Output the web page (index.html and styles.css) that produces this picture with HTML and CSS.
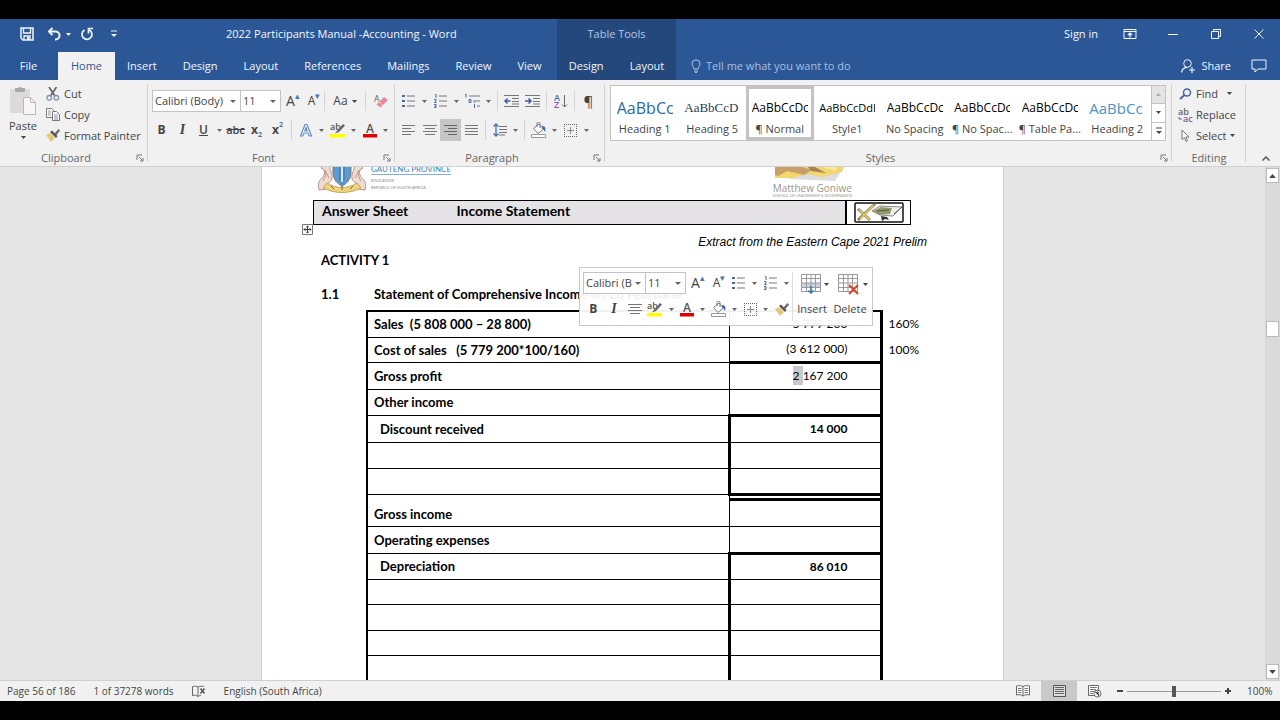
FILE: index.html
```html
<!DOCTYPE html>
<html lang="en">
<head>
  <meta charset="UTF-8">
  <meta name="viewport" content="width=device-width, initial-scale=1.0">
  <title>2022 Participants Manual -Accounting - Word</title>
  <link rel="stylesheet" href="styles.css">
</head>
<body>
  <!-- Icon sprite -->
  <svg class="sprite" aria-hidden="true">
    <symbol id="i-save" viewBox="0 0 14 14"><path d="M1 1h12v12H3l-2-2z" fill="none" stroke="currentColor" stroke-width="1.5"/><path d="M3.5 1v5h7V1M4 13V9h6v4" fill="none" stroke="currentColor" stroke-width="1.3"/><path d="M7 10h2v3H7z" fill="currentColor"/></symbol>
    <symbol id="i-undo" viewBox="0 0 14 14"><path d="M2 4.500h6.500a4 4 0 0 1 0 8H8" fill="none" stroke="currentColor" stroke-width="2"/><path d="M5.500 1L2 4.500 5.500 8" fill="none" stroke="currentColor" stroke-width="2"/></symbol>
    <symbol id="i-redo" viewBox="0 0 14 14"><path d="M9 2.800A5 5 0 1 1 4.500 3" fill="none" stroke="currentColor" stroke-width="1.700"/><path d="M13 1.500H8.500V6.500" fill="none" stroke="currentColor" stroke-width="1.700"/></symbol>
    <symbol id="i-custom" viewBox="0 0 6 8"><path d="M0 1h6" stroke="currentColor"/><path d="M0 4h6L3 7z" fill="currentColor"/></symbol>
    <symbol id="i-display" viewBox="0 0 14 12"><path d="M1 1.500h12v9H1zM1 3.500h12" fill="none" stroke="currentColor"/><path d="M7 9.500V5M5 7l2-2 2 2" fill="none" stroke="currentColor" stroke-width="1.200"/></symbol>
    <symbol id="i-min" viewBox="0 0 10 10"><path d="M0 5.500h10" stroke="currentColor"/></symbol>
    <symbol id="i-restore" viewBox="0 0 10 10"><path d="M.5 2.500h7v7h-7zM2.500 2.500v-2h7v7h-2" fill="none" stroke="currentColor"/></symbol>
    <symbol id="i-close" viewBox="0 0 10 10"><path d="M.5.5l9 9M9.500.5l-9 9" stroke="currentColor"/></symbol>
    <symbol id="i-bulb" viewBox="0 0 10 14"><path d="M3 10C3 8 1 7.500 1 4.800a4 4 0 0 1 8 0C9 7.500 7 8 7 10zM3 12h4M4 13.500h2" fill="none" stroke="currentColor"/></symbol>
    <symbol id="i-share" viewBox="0 0 14 14"><circle cx="6.500" cy="4.500" r="3.800" fill="none" stroke="currentColor"/><path d="M.5 13.500C1 10 3 8.500 6 8.300M11 8v6M8 11h6" fill="none" stroke="currentColor" stroke-width="1.200"/></symbol>
    <symbol id="i-comment" viewBox="0 0 16 14"><path d="M1 1h14v9H7l-3 3v-3H1z" fill="none" stroke="currentColor"/></symbol>
    <symbol id="i-caret" viewBox="0 0 5 3"><path d="M0 0h5L2.500 3z" fill="currentColor"/></symbol>
    <symbol id="i-launch" viewBox="0 0 8 8"><path d="M1 6V1h5" fill="none" stroke="#777"/><path d="M3 3l4 4M7 4v3H4" fill="none" stroke="#777"/></symbol>

    <symbol id="i-paste" viewBox="0 0 28 30"><path d="M1 3h20v24H1z" fill="#dcdadb"/><path d="M6 2h3a2.500 2.500 0 0 1 4 0h3v4H6z" fill="#aaa8a9"/><path d="M14.500 11.500h7l5 5v12h-12z" fill="#f8f6f8" stroke="#bbb7ba"/><path d="M21.500 11.500v5h5" fill="none" stroke="#bbb7ba"/></symbol>
    <symbol id="i-cut" viewBox="0 0 14 14"><path d="M3 0l6 9M10.500 0l-6 9" stroke="#666" stroke-width="1.700"/><circle cx="3.200" cy="10.800" r="2.300" fill="none" stroke="#8294b2" stroke-width="1.300"/><circle cx="10.300" cy="10.800" r="2.300" fill="none" stroke="#8294b2" stroke-width="1.300"/></symbol>
    <symbol id="i-copy" viewBox="0 0 14 13"><path d="M.5.5h5l2 2v7h-7z" fill="#fff" stroke="#777"/><path d="M2 3h3M2 5h3M2 7h3" stroke="#999"/><path d="M6.500 3.500h4l3 3v6h-7z" fill="#fff" stroke="#777"/><path d="M8 7h4M8 9h4M8 11h4" stroke="#8294b2"/></symbol>
    <symbol id="i-painter" viewBox="0 0 14 13"><path d="M0 6l4-2 5 5-4 4z" fill="#e3c97a"/><path d="M4 3l6 6 1.500-2L6 1.500z" fill="#555"/><path d="M8.500 4.500L12.500 0 14 1.500 10.500 6z" fill="#666"/></symbol>
    <symbol id="i-eraser" viewBox="0 0 14 14"><text x="0" y="8" font-size="9" fill="#666" font-family="Open Sans, sans-serif">A</text><path d="M2.500 10.500L10 3l4 3-7.500 7.500z" fill="#e68a9b"/><path d="M5 8l4 3.500" stroke="#f6d5da"/></symbol>
    <symbol id="i-effects" viewBox="0 0 14 14"><path d="M1.500 13L6 1.500h2L12.500 13h-2.300L9 10H5l-1.200 3zM5.800 8h2.400L7 4.500z" fill="#fff" stroke="#5f8fca" stroke-width="1.200"/></symbol>
    <symbol id="i-highlight" viewBox="0 0 16 16"><text x="0" y="8" font-size="9" font-weight="600" fill="#555" font-family="Open Sans, sans-serif">ab</text><path d="M6 10l7-8 2 1.500L9 10l-4 1.500z" fill="#666"/><path d="M0 12h15v3.500H0z" fill="#ff0"/></symbol>
    <symbol id="i-color" viewBox="0 0 16 16"><text x="4" y="11" font-size="12" font-weight="600" fill="#555" font-family="Open Sans, sans-serif">A</text><path d="M1 12h14v3.500H1z" fill="#e00000"/></symbol>
    <symbol id="i-bullets" viewBox="0 0 14 14"><path d="M0 1h3v2H0zM0 6h3v2H0zM0 11h3v2H0z" fill="#4a6c9c"/><path d="M5 2h8M5 7h8M5 12h8" stroke="#777"/></symbol>
    <symbol id="i-numbers" viewBox="0 0 14 14"><path d="M1 .5h1V4M0 5.500h2V7L.5 8.500h2M0 10.500h2v3H0M.5 12H2" fill="none" stroke="#4a6c9c"/><path d="M5 2h8M5 7h8M5 12h8" stroke="#777"/></symbol>
    <symbol id="i-multi" viewBox="0 0 16 14"><path d="M1 0v3.500M0 .5h1M4 5.500h2v3H4zM9 8.500h1M9.500 10v4" fill="none" stroke="#4a6c9c"/><path d="M4 2h11M8 7h7M12 12h3" stroke="#777"/></symbol>
    <symbol id="i-outdent" viewBox="0 0 16 12"><path d="M0 .5h15M8 3.500h7M8 6.500h7M8 9h7M0 11.500h15" stroke="#777"/><path d="M6.500 6H1M3.500 3.500L1 6l2.500 2.500" fill="none" stroke="#3d5f93" stroke-width="1.500"/></symbol>
    <symbol id="i-indent" viewBox="0 0 16 12"><path d="M0 .5h15M8 3.500h7M8 6.500h7M8 9h7M0 11.500h15" stroke="#777"/><path d="M0 6h6M3.500 3.500L6 6 3.500 8.500" fill="none" stroke="#3d5f93" stroke-width="1.500"/></symbol>
    <symbol id="i-sort" viewBox="0 0 14 16"><text x="0" y="8" font-size="9" font-weight="600" fill="#4673ad" font-family="Open Sans, sans-serif">A</text><text x="0" y="15" font-size="9" font-weight="600" fill="#8a5ba5" font-family="Open Sans, sans-serif">Z</text><path d="M10.500 2v12M8 11.500l2.500 2.500 2.500-2.500" fill="none" stroke="#666"/></symbol>
    <symbol id="i-left" viewBox="0 0 14 11"><path d="M0 .5h13M0 3.500h9M0 6.500h13M0 9.500h9" stroke="#777"/></symbol>
    <symbol id="i-center" viewBox="0 0 14 11"><path d="M0 .5h14M2 3.500h10M0 6.500h14M2 9.500h10" stroke="#777"/></symbol>
    <symbol id="i-right" viewBox="0 0 14 11"><path d="M0 .5h13M4 3.500h9M0 6.500h13M4 9.500h9" stroke="#666"/></symbol>
    <symbol id="i-justify" viewBox="0 0 14 11"><path d="M0 .5h13M0 3.500h13M0 6.500h13M0 9.500h13" stroke="#777"/></symbol>
    <symbol id="i-spacing" viewBox="0 0 14 14"><path d="M3 1v12M.5 3.500L3 1l2.500 2.500M.5 10.500L3 13l2.500-2.500" fill="none" stroke="#4673ad" stroke-width="1.300"/><path d="M6 3.500h8M6 6.500h8M6 9.500h8M6 12h6" stroke="#777"/></symbol>
    <symbol id="i-fill" viewBox="0 0 16 16"><path d="M2.500 6.500L8 2l4.500 5L7 11.500z" fill="#fff" stroke="#777"/><path d="M6 5V1.500A1.500 1.500 0 0 1 9 1.500V6" fill="none" stroke="#777"/><path d="M11 4c4 0 4 3 3 6-1-1-1-3-3-3z" fill="#4673ad"/><path d="M.5 12.500h14v3H.5z" fill="#fff" stroke="#999"/></symbol>
    <symbol id="i-borders" viewBox="0 0 13 13"><path d="M0 .5h13M0 12.500h13M.5 0v13M12.500 0v13" fill="none" stroke="#666" stroke-dasharray="1 1"/><path d="M3 6.500h7M6.500 3v7" stroke="#888"/></symbol>
    <symbol id="i-find" viewBox="0 0 13 12"><circle cx="8" cy="4.500" r="3.500" fill="none" stroke="#476898" stroke-width="1.500"/><path d="M5.500 7L1 11" stroke="#476898" stroke-width="2"/></symbol>
    <symbol id="i-replace" viewBox="0 0 15 14"><text x="0" y="7" font-size="9" font-weight="600" fill="#666" font-family="Open Sans, sans-serif">ab</text><text x="5" y="14" font-size="9" font-weight="600" fill="#7a5b95" font-family="Open Sans, sans-serif">ac</text><path d="M1 9v2h3" fill="none" stroke="#4673ad"/></symbol>
    <symbol id="i-select" viewBox="0 0 9 13"><path d="M1 1v9.500l2.500-2 1.500 4 1.500-.7-1.600-3.800H8z" fill="#fff" stroke="#777"/></symbol>
    <symbol id="i-chevron" viewBox="0 0 8 5"><path d="M.5 4.500L4 1l3.500 3.500" fill="none" stroke="#555" stroke-width="1.500"/></symbol>
    <symbol id="i-instable" viewBox="0 0 20 20"><path d="M.5.5h19v17H.5z" fill="#fff"/><path d="M1 9h18v5H1z" fill="#c5d3e6"/><path d="M.5.5h19v17H.5zM.5 4.500h19M.5 9h19M.5 13.500h19M5.500.5v17M10 .5v17M14.500.5v17" fill="none" stroke="#999"/><path d="M10 12v7M7.500 16.500L10 19l2.500-2.500" fill="none" stroke="#3a78a8" stroke-width="1.500"/></symbol>
    <symbol id="i-deltable" viewBox="0 0 22 21"><path d="M.5.5h19v17H.5zM.5 4.500h19M.5 9h19M.5 13.500h19M5.500.5v17M10 .5v17M14.500.5v17" fill="#fff" stroke="#999"/><path d="M11 11l9 9M20 11l-9 9" stroke="#d2492a" stroke-width="2"/></symbol>
    <symbol id="i-proof" viewBox="0 0 14 13"><path d="M6 12V2C4.500 1 2 1 .5 1.500v9c2-.5 4-.5 5.500 1 1-1 2-1 3-1.200M6 2c1.500-1 4-1 6-.5" fill="none" stroke="#666"/><path d="M8.500 3.500l4 5M12.500 3.500l-4 5" stroke="#555" stroke-width="1.500"/></symbol>
    <symbol id="i-read" viewBox="0 0 14 12"><path d="M7 11V1.500C5 .5 2 .5.500 1v9c2-.5 5-.5 6.500 1 1.500-1.500 4.500-1.500 6.500-1V1C12 .5 9 .5 7 1.500" fill="#fff" stroke="#666"/><path d="M2 3.500h3.500M2 5.500h3.500M2 7.500h3.500M8.500 3.500H12M8.500 5.500H12M8.500 7.500H12" stroke="#777"/></symbol>
    <symbol id="i-print" viewBox="0 0 13 12"><path d="M.5.5h12v11H.5z" fill="#ddd" stroke="#555"/><path d="M2 2.500h9M2 4.500h9M2 6.500h9M2 8.500h9" stroke="#666"/></symbol>
    <symbol id="i-web" viewBox="0 0 14 13"><path d="M6 10.500H.5V.5h10V5" fill="#fff" stroke="#666"/><path d="M2 2.500h7M2 4.500h6M2 6.500h4M2 8.500h3" stroke="#777"/><circle cx="9.500" cy="8.500" r="3.500" fill="#fff" stroke="#666"/><path d="M7 7l3 1 1 3M9 5.500l2 3" stroke="#555"/></symbol>
    <symbol id="i-move" viewBox="0 0 11 11"><path d="M.5.5h10v10H.5z" fill="#fff" stroke="#777"/><path d="M5.500 2v7M2 5.500h7M4.300 3.200L5.500 2l1.200 1.200M4.300 7.800L5.500 9l1.200-1.200M3.200 4.300L2 5.500l1.200 1.200M7.800 4.300L9 5.500 7.800 6.700" fill="none" stroke="#333"/></symbol>
  </svg>

  <div class="window">
    <!-- Title bar and ribbon tabs -->
    <header class="header">
      <div class="header-main">
        <div class="title-row">
          <div class="quick-access">
            <button type="button" aria-label="Save"><svg width="14" height="14"><use href="#i-save"/></svg></button>
            <button type="button" aria-label="Undo"><svg width="14" height="14"><use href="#i-undo"/></svg></button>
            <button type="button" class="caret" aria-label="Undo list"><svg width="5" height="3"><use href="#i-caret"/></svg></button>
            <button type="button" aria-label="Redo"><svg width="14" height="14"><use href="#i-redo"/></svg></button>
            <button type="button" aria-label="Customize"><svg width="6" height="8"><use href="#i-custom"/></svg></button>
          </div>
          <div class="doc-title">2022 Participants Manual -Accounting - Word</div>
        </div>
        <nav class="tabs">
          <button type="button" class="tab file">File</button>
          <button type="button" class="tab active">Home</button>
          <button type="button" class="tab">Insert</button>
          <button type="button" class="tab">Design</button>
          <button type="button" class="tab">Layout</button>
          <button type="button" class="tab">References</button>
          <button type="button" class="tab">Mailings</button>
          <button type="button" class="tab">Review</button>
          <button type="button" class="tab">View</button>
        </nav>
      </div>
      <div class="header-context">
        <div class="title-row">Table Tools</div>
        <nav class="tabs">
          <button type="button" class="tab">Design</button>
          <button type="button" class="tab">Layout</button>
        </nav>
      </div>
      <div class="header-end">
        <div class="title-row">
          <button type="button" class="sign-in">Sign in</button>
          <button type="button" class="win-btn" aria-label="Ribbon display"><svg width="14" height="12"><use href="#i-display"/></svg></button>
          <button type="button" class="win-btn" aria-label="Minimize"><svg width="10" height="10"><use href="#i-min"/></svg></button>
          <button type="button" class="win-btn" aria-label="Restore"><svg width="10" height="10"><use href="#i-restore"/></svg></button>
          <button type="button" class="win-btn" aria-label="Close"><svg width="10" height="10"><use href="#i-close"/></svg></button>
        </div>
        <div class="tabs">
          <label class="tell-me"><svg width="10" height="14"><use href="#i-bulb"/></svg><input type="text" placeholder="Tell me what you want to do" aria-label="Tell me"></label>
          <button type="button" class="share"><svg width="14" height="14"><use href="#i-share"/></svg>Share</button>
          <button type="button" class="win-btn" aria-label="Comments"><svg width="16" height="14"><use href="#i-comment"/></svg></button>
        </div>
      </div>
    </header>

    <!-- Ribbon -->
    <div class="ribbon">
      <section class="group clipboard">
        <div class="group-body">
          <button type="button" class="paste"><svg width="28" height="30"><use href="#i-paste"/></svg>Paste<svg class="arrow" width="5" height="3"><use href="#i-caret"/></svg></button>
          <div class="stack">
            <button type="button" class="small"><svg width="14" height="14"><use href="#i-cut"/></svg>Cut</button>
            <button type="button" class="small"><svg width="14" height="13"><use href="#i-copy"/></svg>Copy</button>
            <button type="button" class="small"><svg width="14" height="13"><use href="#i-painter"/></svg>Format Painter</button>
          </div>
        </div>
        <div class="group-label"><span>Clipboard</span><button type="button" aria-label="Clipboard options"><svg width="8" height="8"><use href="#i-launch"/></svg></button></div>
      </section>

      <section class="group font">
        <div class="group-body rows">
          <div class="row">
            <span class="combo family"><select aria-label="Font"><option>Calibri (Body)</option></select></span>
            <span class="combo size"><select aria-label="Font size"><option>11</option></select></span>
            <button type="button" class="icon grow">A<sup>▴</sup></button>
            <button type="button" class="icon shrink">A<sup>▾</sup></button>
            <i class="sep tight"></i>
            <button type="button" class="case">Aa<svg width="5" height="3"><use href="#i-caret"/></svg></button>
            <i class="sep tight"></i>
            <button type="button" class="icon wide" aria-label="Clear formatting"><svg width="14" height="14"><use href="#i-eraser"/></svg></button>
          </div>
          <div class="row">
            <button type="button" class="icon bold">B</button>
            <button type="button" class="icon italic">I</button>
            <button type="button" class="icon underline">U</button>
            <button type="button" class="caret" aria-label="Underline style"><svg width="5" height="3"><use href="#i-caret"/></svg></button>
            <button type="button" class="icon strike">abc</button>
            <button type="button" class="icon script">x<sub>2</sub></button>
            <button type="button" class="icon script">x<sup>2</sup></button>
            <i class="sep"></i>
            <button type="button" class="icon" aria-label="Text effects"><svg width="14" height="14"><use href="#i-effects"/></svg></button>
            <button type="button" class="caret" aria-label="Effects list"><svg width="5" height="3"><use href="#i-caret"/></svg></button>
            <button type="button" class="icon" aria-label="Highlight"><svg width="16" height="16"><use href="#i-highlight"/></svg></button>
            <button type="button" class="caret" aria-label="Highlight colours"><svg width="5" height="3"><use href="#i-caret"/></svg></button>
            <button type="button" class="icon" aria-label="Font colour"><svg width="16" height="16"><use href="#i-color"/></svg></button>
            <button type="button" class="caret" aria-label="Font colours"><svg width="5" height="3"><use href="#i-caret"/></svg></button>
          </div>
        </div>
        <div class="group-label"><span>Font</span><button type="button" aria-label="Font options"><svg width="8" height="8"><use href="#i-launch"/></svg></button></div>
      </section>

      <section class="group paragraph">
        <div class="group-body rows">
          <div class="row">
            <button type="button" class="icon" aria-label="Bullets"><svg width="14" height="14"><use href="#i-bullets"/></svg></button>
            <button type="button" class="caret" aria-label="Bullet list"><svg width="5" height="3"><use href="#i-caret"/></svg></button>
            <button type="button" class="icon" aria-label="Numbering"><svg width="14" height="14"><use href="#i-numbers"/></svg></button>
            <button type="button" class="caret" aria-label="Number list"><svg width="5" height="3"><use href="#i-caret"/></svg></button>
            <button type="button" class="icon" aria-label="Multilevel"><svg width="16" height="14"><use href="#i-multi"/></svg></button>
            <button type="button" class="caret" aria-label="Multilevel list"><svg width="5" height="3"><use href="#i-caret"/></svg></button>
            <i class="sep"></i>
            <button type="button" class="icon" aria-label="Decrease indent"><svg width="16" height="12"><use href="#i-outdent"/></svg></button>
            <button type="button" class="icon" aria-label="Increase indent"><svg width="16" height="12"><use href="#i-indent"/></svg></button>
            <i class="sep"></i>
            <button type="button" class="icon" aria-label="Sort"><svg width="14" height="16"><use href="#i-sort"/></svg></button>
            <i class="sep"></i>
            <button type="button" class="icon pilcrow">¶</button>
          </div>
          <div class="row">
            <button type="button" class="icon" aria-label="Align left"><svg width="14" height="11"><use href="#i-left"/></svg></button>
            <button type="button" class="icon" aria-label="Centre"><svg width="14" height="11"><use href="#i-center"/></svg></button>
            <button type="button" class="icon pressed" aria-label="Align right"><svg width="14" height="11"><use href="#i-right"/></svg></button>
            <button type="button" class="icon" aria-label="Justify"><svg width="14" height="11"><use href="#i-justify"/></svg></button>
            <i class="sep"></i>
            <button type="button" class="icon" aria-label="Line spacing"><svg width="14" height="14"><use href="#i-spacing"/></svg></button>
            <button type="button" class="caret" aria-label="Spacing list"><svg width="5" height="3"><use href="#i-caret"/></svg></button>
            <i class="sep"></i>
            <button type="button" class="icon" aria-label="Shading"><svg width="16" height="16"><use href="#i-fill"/></svg></button>
            <button type="button" class="caret" aria-label="Shading colours"><svg width="5" height="3"><use href="#i-caret"/></svg></button>
            <button type="button" class="icon" aria-label="Borders"><svg width="13" height="13"><use href="#i-borders"/></svg></button>
            <button type="button" class="caret" aria-label="Border list"><svg width="5" height="3"><use href="#i-caret"/></svg></button>
          </div>
        </div>
        <div class="group-label"><span>Paragraph</span><button type="button" aria-label="Paragraph options"><svg width="8" height="8"><use href="#i-launch"/></svg></button></div>
      </section>

      <section class="group styles">
        <div class="group-body">
          <div class="gallery">
            <button type="button" class="style h1"><span>AaBbCc</span>Heading 1</button>
            <button type="button" class="style h5"><span>AaBbCcD</span>Heading 5</button>
            <button type="button" class="style selected"><span>AaBbCcDc</span>¶ Normal</button>
            <button type="button" class="style s1"><span>AaBbCcDdE</span>Style1</button>
            <button type="button" class="style"><span>AaBbCcDc</span>No Spacing</button>
            <button type="button" class="style"><span>AaBbCcDc</span>¶ No Spac...</button>
            <button type="button" class="style"><span>AaBbCcDc</span>¶ Table Pa...</button>
            <button type="button" class="style h2"><span>AaBbCc</span>Heading 2</button>
            <div class="gallery-scroll">
              <button type="button" class="off" aria-label="Up"><svg class="flip" width="5" height="3"><use href="#i-caret"/></svg></button>
              <button type="button" aria-label="Down"><svg width="5" height="3"><use href="#i-caret"/></svg></button>
              <button type="button" aria-label="More"><svg width="6" height="8"><use href="#i-custom"/></svg></button>
            </div>
          </div>
        </div>
        <div class="group-label"><span>Styles</span><button type="button" aria-label="Styles options"><svg width="8" height="8"><use href="#i-launch"/></svg></button></div>
      </section>

      <section class="group editing">
        <div class="group-body">
          <div class="stack">
            <button type="button" class="small find"><svg width="15" height="12"><use href="#i-find"/></svg>Find<svg class="arrow" width="5" height="3"><use href="#i-caret"/></svg></button>
            <button type="button" class="small"><svg width="15" height="14"><use href="#i-replace"/></svg>Replace</button>
            <button type="button" class="small"><svg width="15" height="13"><use href="#i-select"/></svg>Select<svg class="arrow" width="5" height="3"><use href="#i-caret"/></svg></button>
          </div>
        </div>
        <div class="group-label"><span>Editing</span></div>
      </section>
      <button type="button" class="collapse" aria-label="Collapse ribbon"><svg width="8" height="5"><use href="#i-chevron"/></svg></button>
    </div>

    <!-- Document -->
    <main class="workspace">
      <div class="canvas">
        <article class="page">
          <div class="letterhead">
            <svg class="crest" width="50" height="44" viewBox="0 0 50 44">
              <path d="M16 4h18v18c0 8-5 12-9 14-4-2-9-6-9-14z" fill="#5b9bd0" stroke="#777"/>
              <path d="M22 8h6v22l-3 4-3-4z" fill="#4a86bd"/>
              <path d="M24 8h2v24h-2z" fill="#e2e7ed"/>
              <path d="M13 6c-6 2-5 8-9 12 5 1 4 7 1 10-4 3-4 7-3 12l7-1c-1-5 4-6 6-10 1-7-3-9-2-12zM37 6c6 2 5 8 9 12-5 1-4 7-1 10 4 3 4 7 3 12l-7-1c1-5-4-6-6-10-1-7 3-9 2-12z" fill="#eddcd2" stroke="#b9958b"/>
              <path d="M5 18c4 4 5 7 1 13M45 18c-4 4-5 7-1 13M8 20l4 8M42 20l-4 8" fill="none" stroke="#c78f80"/>
              <path d="M10 33c10 6 20 6 30 0l4 5c-12 6-26 6-38 0z" fill="#f1d37c" stroke="#c2a768"/>
              <path d="M25 36v4M14 36l3 3M36 36l-3 3" stroke="#6f6252"/>
            </svg>
            <div class="department">
              <strong>GAUTENG PROVINCE</strong>
              <small>EDUCATION</small>
              <small>REPUBLIC OF SOUTH AFRICA</small>
            </div>
            <div class="school">
              <svg width="74" height="28" viewBox="0 0 74 28">
                <path d="M14 24l46 2 10-16-4-8z" fill="#ddd"/>
                <path d="M0 0h73l-6 17-9 2-11 3-15-3-14 4L0 23z" fill="#f2d66e"/>
                <path d="M5 0l18 2 4 10 10 3-8 5-17-4-9 5L0 20V8z" fill="#c79f67"/>
                <path d="M27 4l18-2-5 10 11 6-15-2z" fill="#a8814e"/>
                <path d="M42 3l22 2-3 11-12-3z" fill="#fae995"/>
              </svg>
              <em>Matthew Goniwe</em>
              <small>SCHOOL OF LEADERSHIP &amp; GOVERNANCE</small>
            </div>
          </div>

          <table class="banner">
            <tr>
              <th class="kind">Answer Sheet</th>
              <th class="topic">Income Statement</th>
              <td>
                <svg width="50" height="21" viewBox="0 0 50 21">
                  <rect x="1" y="1" width="48" height="19" rx="1" fill="#fff" stroke="#111" stroke-width="1.500"/>
                  <path d="M4 7l12 11M4 18L21 2" stroke="#777" stroke-width="3"/>
                  <path d="M5 8l11 10M6 17L20 3" stroke="#d8c25e" stroke-width="2"/>
                  <path d="M18 9l8-5 22 1-9 9-13-1z" fill="#f1f1f1" stroke="#888"/>
                  <path d="M19 9l8-4 11 1-2 6-11 1z" fill="#949a67"/>
                  <path d="M23 9l12-1M40 12l8-7" stroke="#555"/>
                  <path d="M27 14l6 1 2 3-4-1-3 2z" fill="#333"/>
                </svg>
              </td>
            </tr>
          </table>

          <p class="source">Extract from the Eastern Cape 2021 Prelim</p>
          <h2 class="activity">ACTIVITY 1</h2>
          <h3 class="question"><span>1.1</span>Statement of Comprehensive Income on 28 Februarie</h3>

          <table class="statement">
            <tr class="first"><th>Sales&nbsp; (5 808 000 – 28 800)</th><td>5 779 200</td><td class="note">160%</td></tr>
            <tr class="short"><th>Cost of sales&nbsp;&nbsp; (5 779 200*100/160)</th><td>(3 612 000)</td><td class="note">100%</td></tr>
            <tr class="tall"><th>Gross profit</th><td class="line-top"><mark>2 </mark>167 200</td></tr>
            <tr><th>Other income</th><td></td></tr>
            <tr class="tall"><th class="sub">Discount received</th><td class="line-top boxed"><b>14 000</b></td></tr>
            <tr><th></th><td class="boxed"></td></tr>
            <tr><th></th><td class="boxed"></td></tr>
            <tr class="gap"><th rowspan="2" class="total">Gross income</th><td class="line-top"></td></tr>
            <tr class="tall"><td class="line-top"></td></tr>
            <tr class="tall"><th>Operating expenses</th><td></td></tr>
            <tr><th class="sub">Depreciation</th><td class="line-top boxed"><b>86 010</b></td></tr>
            <tr class="short"><th></th><td class="boxed"></td></tr>
            <tr><th></th><td class="boxed"></td></tr>
            <tr class="short"><th></th><td class="boxed"></td></tr>
            <tr><th></th><td class="boxed"></td></tr>
          </table>

          <svg class="move-handle" width="11" height="11"><use href="#i-move"/></svg>

          <!-- Floating mini toolbar -->
          <div class="mini-toolbar">
            <div class="mini-rows">
              <div class="row">
                <span class="combo mini-family"><select aria-label="Font"><option>Calibri (B</option></select></span>
                <span class="combo size"><select aria-label="Font size"><option>11</option></select></span>
                <button type="button" class="icon grow">A<sup>▴</sup></button>
                <button type="button" class="icon shrink">A<sup>▾</sup></button>
                <button type="button" class="icon" aria-label="Bullets"><svg width="14" height="14"><use href="#i-bullets"/></svg></button>
                <button type="button" class="caret" aria-label="Bullet list"><svg width="5" height="3"><use href="#i-caret"/></svg></button>
                <button type="button" class="icon" aria-label="Numbering"><svg width="14" height="14"><use href="#i-numbers"/></svg></button>
                <button type="button" class="caret" aria-label="Number list"><svg width="5" height="3"><use href="#i-caret"/></svg></button>
              </div>
              <div class="row">
                <button type="button" class="icon bold">B</button>
                <button type="button" class="icon italic">I</button>
                <button type="button" class="icon" aria-label="Centre"><svg width="14" height="11"><use href="#i-center"/></svg></button>
                <button type="button" class="icon" aria-label="Highlight"><svg width="16" height="16"><use href="#i-highlight"/></svg></button>
                <button type="button" class="caret" aria-label="Highlight colours"><svg width="5" height="3"><use href="#i-caret"/></svg></button>
                <button type="button" class="icon" aria-label="Font colour"><svg width="16" height="16"><use href="#i-color"/></svg></button>
                <button type="button" class="caret" aria-label="Font colours"><svg width="5" height="3"><use href="#i-caret"/></svg></button>
                <button type="button" class="icon" aria-label="Shading"><svg width="16" height="16"><use href="#i-fill"/></svg></button>
                <button type="button" class="caret" aria-label="Shading colours"><svg width="5" height="3"><use href="#i-caret"/></svg></button>
                <button type="button" class="icon" aria-label="Borders"><svg width="13" height="13"><use href="#i-borders"/></svg></button>
                <button type="button" class="caret" aria-label="Border list"><svg width="5" height="3"><use href="#i-caret"/></svg></button>
                <button type="button" class="icon" aria-label="Format painter"><svg width="14" height="13"><use href="#i-painter"/></svg></button>
              </div>
            </div>
            <button type="button" class="mini-big"><span><svg width="20" height="20"><use href="#i-instable"/></svg><svg width="5" height="3"><use href="#i-caret"/></svg></span>Insert</button>
            <button type="button" class="mini-big"><span><svg width="22" height="21"><use href="#i-deltable"/></svg><svg width="5" height="3"><use href="#i-caret"/></svg></span>Delete</button>
          </div>
        </article>
      </div>
      <div class="scrollbar">
        <button type="button" aria-label="Scroll up"><svg class="flip" width="7" height="4"><use href="#i-caret"/></svg></button>
        <div class="track"><div class="thumb"></div></div>
        <button type="button" aria-label="Scroll down"><svg width="7" height="4"><use href="#i-caret"/></svg></button>
      </div>
    </main>

    <footer class="status">
      <span>Page 56 of 186</span>
      <span>1 of 37278 words</span>
      <svg width="14" height="13"><use href="#i-proof"/></svg>
      <span>English (South Africa)</span>
      <div class="status-end">
        <div class="views">
          <button type="button" aria-label="Read mode"><svg width="14" height="12"><use href="#i-read"/></svg></button>
          <button type="button" class="pressed" aria-label="Print layout"><svg width="13" height="12"><use href="#i-print"/></svg></button>
          <button type="button" aria-label="Web layout"><svg width="14" height="13"><use href="#i-web"/></svg></button>
        </div>
        <button type="button" class="zoom-btn minus" aria-label="Zoom out"></button>
        <input type="range" class="zoom" min="0" max="200" value="100" aria-label="Zoom">
        <button type="button" class="zoom-btn plus" aria-label="Zoom in"></button>
        <span class="percent">100%</span>
      </div>
    </footer>
  </div>
</body>
</html>
```

FILE: styles.css
```css
* {
  margin: 0;
  padding: 0;
  box-sizing: border-box;
}

body {
  height: 100vh;
  padding: 19px 0;
  background-color: #000;
  color: #444;
  font-family: "Open Sans", "Segoe UI", sans-serif;
  font-size: 11px;
  line-height: 16px;
  overflow: hidden;
}

button, input, select {
  font: inherit;
  color: inherit;
  background: none;
  border: none;
}

button {
  display: flex;
  align-items: center;
  justify-content: center;
  white-space: nowrap;
}

svg {
  display: block;
  flex-shrink: 0;
}

.sprite {
  display: none;
}

.flip {
  transform: rotate(180deg);
}

.window {
  height: 100%;
  display: flex;
  flex-direction: column;
}

/* Title bar and tabs */
.header {
  display: flex;
  background-color: #2b5797;
  color: #f2f6fc;
}

.header-main {
  width: 557px;
}

.header-context {
  width: 119px;
  background-color: #24477c;
}

.header-end {
  flex: 1;
}

.title-row {
  height: 30px;
  display: flex;
  align-items: center;
}

.tabs {
  height: 31px;
  padding-top: 3px;
  display: flex;
  align-items: stretch;
}

.quick-access {
  width: 226px;
  padding-left: 16px;
  display: flex;
}

.quick-access button {
  width: 22px;
}

.quick-access button + button {
  margin-left: 5px;
}

.quick-access button.caret {
  width: 6px;
  margin-left: 0;
  color: inherit;
}

.header-context .title-row {
  justify-content: center;
  color: #b4c7e4;
}

.header-context .tabs {
  justify-content: center;
}

.tab {
  padding: 0 13px;
}

.tab.file {
  width: 57px;
}

.tab.active {
  width: 57px;
  margin-left: 1px;
  margin-right: -1px;
  background-color: #f1f1f1;
  color: #2b5797;
}

.header-end .title-row {
  justify-content: flex-end;
}

.sign-in {
  margin-right: 10px;
}

.win-btn {
  width: 43px;
}

.tell-me {
  flex: 1;
  padding-left: 15px;
  display: flex;
  align-items: center;
  gap: 5px;
  color: #b4c7e4;
}

.tell-me input {
  width: 200px;
}

.tell-me input::placeholder {
  color: #a9bfdf;
  opacity: 1;
}

.share {
  gap: 6px;
  margin-right: 6px;
}

/* Ribbon */
.ribbon {
  height: 87px;
  display: flex;
  background-color: #f1f1f1;
  border-bottom: 1px solid #d0d0d0;
}

.group {
  display: flex;
  flex-direction: column;
  position: relative;
}

.group::after {
  content: "";
  position: absolute;
  right: 0;
  top: 4px;
  bottom: 4px;
  width: 1px;
  background-color: #d4d4d4;
}

.clipboard {
  width: 148px;
}

.font {
  width: 247px;
}

.paragraph {
  width: 210px;
}

.styles {
  flex: 1;
}

.editing {
  width: 74px;
}

.group-body {
  flex: 1;
  display: flex;
}

.group-body.rows {
  flex-direction: column;
  gap: 7px;
  padding: 10px 0 0 3px;
}

.group-label {
  height: 16px;
  display: flex;
  color: #666;
}

.group-label span {
  flex: 1;
  text-align: center;
}

.group-label button {
  width: 16px;
}

.row {
  height: 22px;
  display: flex;
  align-items: center;
}

.paste {
  width: 38px;
  margin-left: 4px;
  padding-top: 6px;
  flex-direction: column;
  justify-content: flex-start;
  gap: 2px;
}

.stack {
  padding-top: 3px;
  margin-left: 4px;
}

.editing .stack {
  margin-left: 6px;
}

.small {
  height: 21px;
  gap: 4px;
}

.editing .small {
  gap: 3px;
}

.small .arrow {
  margin-left: 1px;
}

.small.find .arrow {
  margin-left: 6px;
}

.combo {
  position: relative;
  height: 22px;
  border: 1px solid #c3c3c3;
  background-color: #fff;
}

.combo::after {
  content: "";
  position: absolute;
  right: 4px;
  top: 9px;
  border: 3px solid transparent;
  border-top-color: #666;
  border-bottom: none;
}

.combo select {
  appearance: none;
  width: 100%;
  height: 20px;
  padding-left: 2px;
}

.combo.family {
  width: 89px;
  margin-left: 1px;
}

.combo.mini-family {
  width: 63px;
}

.combo.size {
  width: 41px;
  margin-left: -1px;
}

.icon {
  width: 21px;
  height: 22px;
}

.icon.wide {
  width: 28px;
}

.icon.pressed {
  background-color: #c6c6c6;
}

.caret {
  width: 11px;
  height: 22px;
  color: #666;
}

.grow, .shrink {
  padding-left: 3px;
}

.grow {
  font-size: 14px;
}

.shrink {
  font-size: 12px;
}

.grow sup, .shrink sup {
  font-size: 9px;
  line-height: 11px;
  color: #4673ad;
  align-self: flex-start;
}

.case {
  width: 38px;
  gap: 4px;
  font-size: 12px;
}

.sep {
  width: 1px;
  height: 20px;
  margin: 0 3px;
  background-color: #d4d4d4;
}

.sep.tight {
  margin: 0 1px;
}

.bold, .script {
  font-weight: 700;
  font-size: 12px;
}

.italic {
  font-family: "Liberation Serif", serif;
  font-style: italic;
  font-weight: 700;
  font-size: 14px;
}

.underline {
  font-weight: 600;
  font-size: 12px;
  text-decoration: underline;
}

.strike {
  font-weight: 600;
  text-decoration: line-through;
}

.script sub, .script sup {
  font-size: 7px;
  line-height: 12px;
  color: #4673ad;
}

.script sub {
  align-self: flex-end;
}

.script sup {
  align-self: flex-start;
}

.pilcrow {
  font-size: 15px;
}

/* Style gallery */
.gallery {
  flex: 1;
  height: 56px;
  margin: 5px 6px 0 5px;
  display: flex;
  border: 1px solid #c3c3c3;
  background-color: #fff;
}

.style {
  flex: 1 1 12%;
  min-width: 0;
  flex-direction: column;
  justify-content: flex-end;
  padding-bottom: 3px;
  gap: 3px;
}

.style span {
  width: 56px;
  height: 20px;
  line-height: 20px;
  overflow: hidden;
  text-align: left;
  color: #000;
  font-size: 12px;
}

.style.h1 span {
  font-size: 16px;
  color: #2a6a9e;
}

.style.h2 span {
  font-size: 15px;
  color: #4c92c2;
}

.style.h5 span {
  font-family: "Liberation Serif", serif;
  font-size: 13px;
  color: #1f3a55;
}

.style.s1 span {
  font-size: 11px;
}

.style.selected {
  border: 3px solid #c3c3c3;
  padding-bottom: 0;
}

.gallery-scroll {
  width: 14px;
  flex-shrink: 0;
  display: flex;
  flex-direction: column;
  border-left: 1px solid #c3c3c3;
}

.gallery-scroll button {
  flex: 1;
}

.gallery-scroll button + button {
  border-top: 1px solid #c3c3c3;
}

.gallery-scroll .off {
  background-color: #e4e4e4;
  color: #aaa;
}

.collapse {
  width: 34px;
  height: 16px;
  padding-left: 5px;
  align-self: flex-end;
}

/* Document area */
.workspace {
  flex: 1;
  min-height: 0;
  display: flex;
  background-color: #e5e5e5;
}

.canvas {
  flex: 1;
  overflow: hidden;
}

.page {
  position: relative;
  width: 743px;
  margin: 0 auto;
  padding: 0 76px 0 51px;
  min-height: 100%;
  background-color: #fff;
  border: 1px solid #cfcfcf;
  border-top: none;
  color: #000;
  font-family: Lato, Calibri, sans-serif;
  font-size: 13px;
}

.letterhead {
  height: 33px;
  padding: 0 75px 2px 4px;
  display: flex;
  align-items: flex-end;
}

.crest {
  margin-bottom: 4px;
}

.department {
  margin-left: 4px;
  padding-bottom: 7px;
  display: flex;
  flex-direction: column;
}

.department strong {
  font-size: 8px;
  line-height: 9px;
  font-weight: 400;
  color: #3f7fb0;
  border-bottom: 1px solid #7fb2da;
  margin-bottom: 2px;
}

.department small {
  font-size: 4px;
  line-height: 7px;
  color: #888;
}

.school {
  margin-left: auto;
  display: flex;
  flex-direction: column;
  align-items: center;
  color: #9c968c;
}

.school em {
  font-family: "Open Sans", sans-serif;
  font-style: normal;
  font-size: 10px;
  line-height: 11px;
}

.school small {
  font-size: 4px;
  line-height: 4px;
}

.banner {
  width: 598px;
  height: 25px;
  border-collapse: collapse;
  border: 1px solid #000;
  font-size: 14px;
}

.banner th {
  padding: 0 0 3px 8px;
  text-align: left;
  background-color: #e5e3e5;
}

.banner .kind {
  width: 135px;
}

.banner td {
  width: 65px;
  padding-left: 7px;
  border-left: 2px solid #000;
}

.source {
  margin-top: 9px;
  text-align: right;
  font-family: "Liberation Sans", Arial, sans-serif;
  font-style: italic;
  font-size: 12px;
}

.activity {
  padding-left: 8px;
  margin-top: 2px;
  font-size: 13px;
}

.question {
  padding-left: 8px;
  margin-top: 18px;
  display: flex;
  font-size: 13px;
}

.question span {
  width: 53px;
}

.statement {
  width: 565px;
  margin: 8px 0 0 53px;
  border-collapse: collapse;
  table-layout: fixed;
  font-size: 12px;
}

.statement tr {
  height: 26px;
}

.statement .tall {
  height: 27px;
}

.statement .short {
  height: 25px;
}

.statement .gap {
  height: 5px;
}

.statement th {
  width: 362px;
  padding-left: 6px;
  text-align: left;
  font-size: 13px;
  border: 1px solid #000;
  border-left: 2px solid #000;
}

.statement .sub {
  padding-left: 12px;
}

.statement .total {
  padding-top: 8px;
}

.statement td {
  width: 152px;
  padding-right: 32px;
  text-align: right;
  border: 1px solid #000;
  border-right: 3px solid #000;
}

.statement .first th, .statement .first td {
  border-top: 2px solid #000;
}

.statement td.line-top {
  border-top: 3px solid #000;
}

.statement td.boxed {
  border-left: 3px solid #000;
}

.statement td.note {
  width: 51px;
  padding: 0 0 0 6px;
  border: none;
  border-left: 3px solid #000;
  text-align: left;
}

.statement mark {
  padding: 2px 0;
  background-color: #c9c9c9;
  color: #000;
  white-space: pre;
}

.move-handle {
  position: absolute;
  left: 40px;
  top: 57px;
}

.mini-toolbar {
  position: absolute;
  left: 317px;
  top: 100px;
  width: 294px;
  height: 59px;
  padding: 4px 3px;
  display: flex;
  background-color: rgba(255, 255, 255, 0.94);
  border: 1px solid #c8c8c8;
  color: #444;
  font-family: "Open Sans", sans-serif;
  font-size: 11px;
}

.mini-rows {
  width: 210px;
  display: flex;
  flex-direction: column;
  gap: 4px;
  border-right: 1px solid #ddd;
}

.mini-big {
  width: 38px;
  flex-direction: column;
  justify-content: flex-start;
  gap: 5px;
}

.mini-big span {
  height: 24px;
  padding-left: 6px;
  display: flex;
  align-items: center;
  gap: 3px;
}

/* Scrollbar */
.scrollbar {
  width: 15px;
  display: flex;
  flex-direction: column;
  background-color: #dadada;
}

.scrollbar button {
  height: 15px;
  margin: 1px;
  background-color: #fff;
  border: 1px solid #bbb;
}

.track {
  flex: 1;
  padding-top: 137px;
}

.thumb {
  height: 16px;
  margin: 0 1px;
  background-color: #fff;
  border: 1px solid #bbb;
}

/* Status bar */
.status {
  height: 21px;
  padding-left: 7px;
  display: flex;
  align-items: center;
  gap: 18px;
  background-color: #f1f1f1;
  border-top: 1px solid #cfcfcf;
  font-size: 10px;
}

.status-end {
  margin-left: auto;
  align-self: stretch;
  display: flex;
  align-items: center;
  gap: 3px;
}

.views {
  display: flex;
  align-self: stretch;
}

.views button {
  width: 36px;
}

.views .pressed {
  background-color: #c9c9c9;
}

.zoom-btn {
  position: relative;
  width: 8px;
  height: 8px;
}

.zoom-btn::before, .zoom-btn.plus::after {
  content: "";
  position: absolute;
  left: 1px;
  top: 3px;
  width: 6px;
  height: 2px;
  background-color: #444;
}

.zoom-btn.plus::after {
  left: 3px;
  top: 1px;
  width: 2px;
  height: 6px;
}

.zoom {
  appearance: none;
  width: 94px;
  height: 12px;
  background: linear-gradient(#999, #999) center / 100% 1px no-repeat;
}

.zoom::-webkit-slider-thumb {
  appearance: none;
  width: 4px;
  height: 11px;
  background-color: #555;
}

.percent {
  width: 33px;
  margin-left: 12px;
}
```
